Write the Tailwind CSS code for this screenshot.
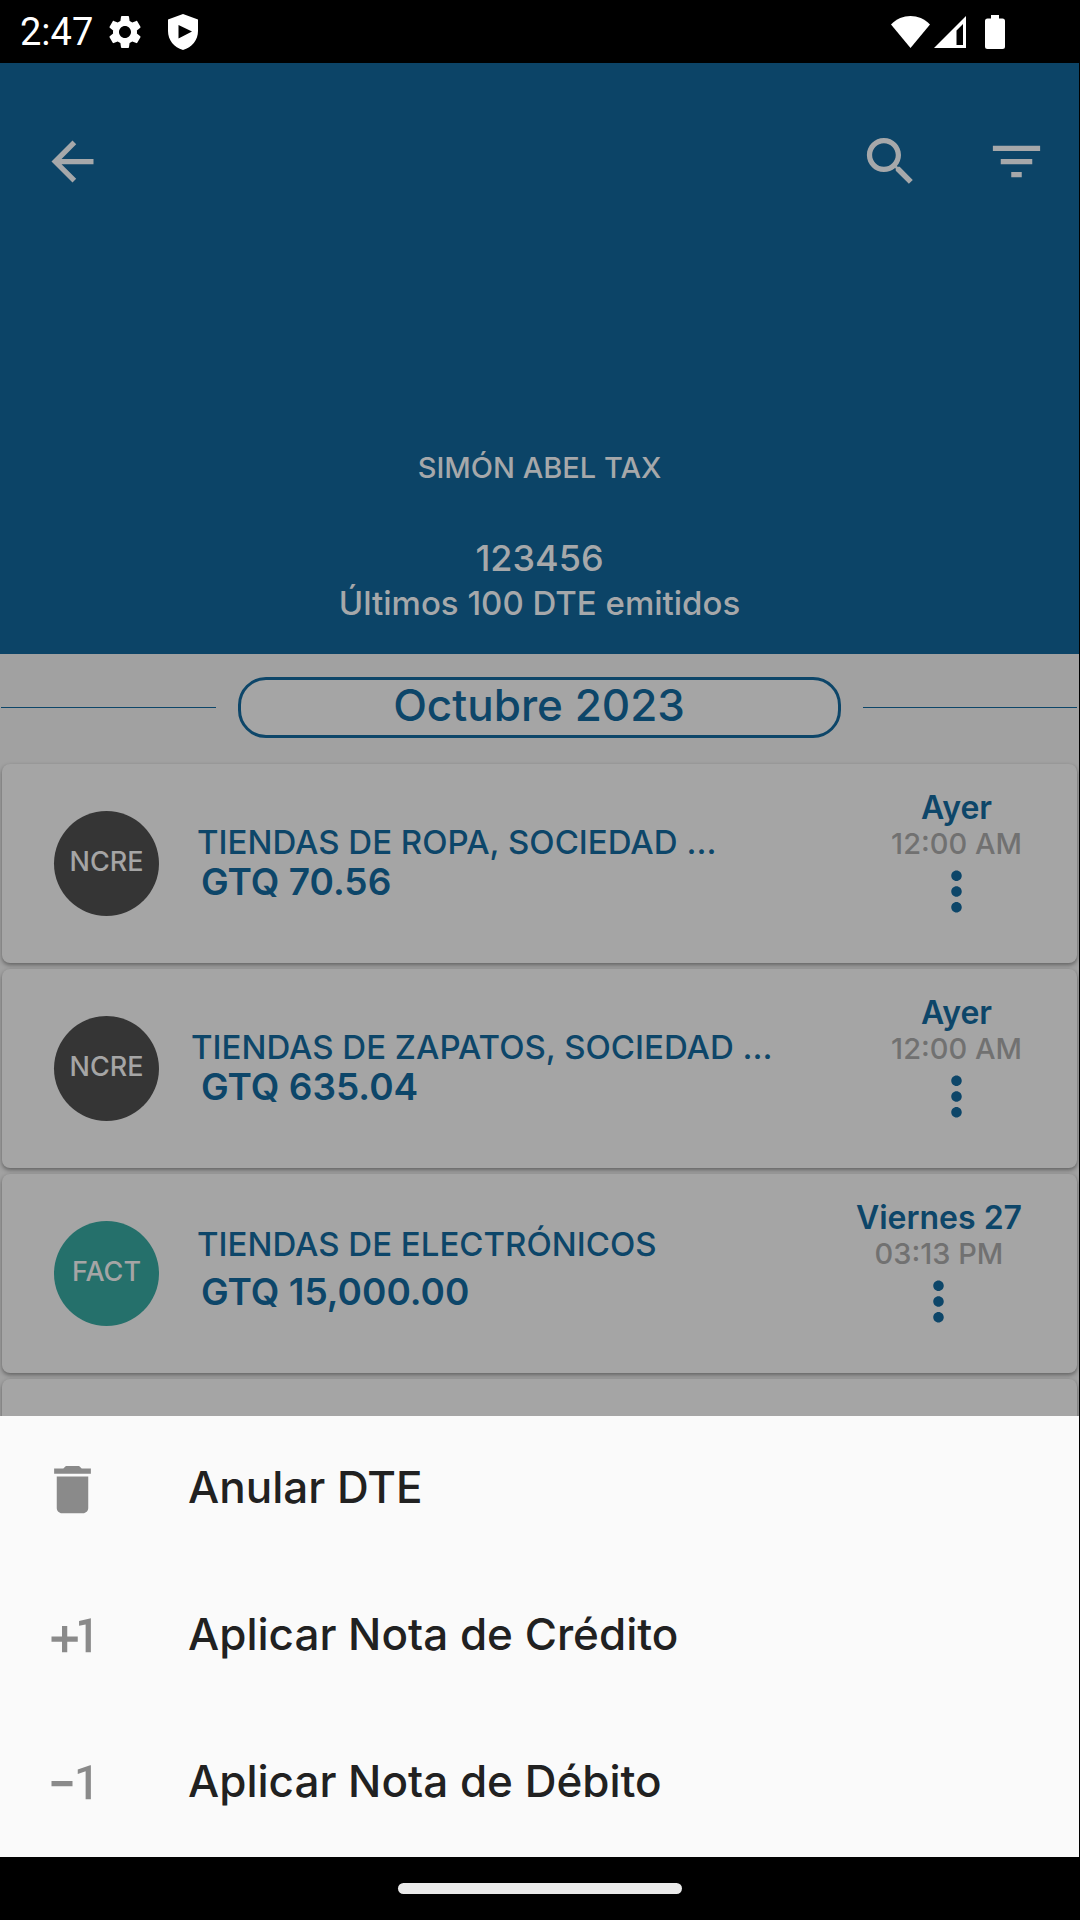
<!DOCTYPE html>
<html lang="es">
<head>
<meta charset="utf-8">
<meta name="viewport" content="width=device-width, initial-scale=1">
<title>DTE emitidos</title>
<script src="https://cdn.jsdelivr.net/npm/@tailwindcss/browser@4"></script>
</head>
<body class="flex h-screen flex-col bg-black font-['Inter',sans-serif] font-medium">
  <svg class="hidden" aria-hidden="true">
    <symbol id="more" viewBox="0 0 24 24"><path d="M12 8c1.1 0 2-.9 2-2s-.9-2-2-2-2 .9-2 2 .9 2 2 2zm0 2c-1.1 0-2 .9-2 2s.9 2 2 2 2-.9 2-2-.9-2-2-2zm0 6c-1.1 0-2 .9-2 2s.9 2 2 2 2-.9 2-2-.9-2-2-2z"/></symbol>
  </svg>

  <!-- Status bar -->
  <div class="flex h-[63px] shrink-0 items-center justify-between pr-[75px] pl-5 text-white">
    <div class="flex items-center">
      <span class="font-['Roboto',sans-serif] text-[38px] leading-none font-normal">2:47</span>
      <svg class="ml-3 size-10" viewBox="0 0 24 24" fill="currentColor"><path d="M19.14 12.94c.04-.3.06-.61.06-.94 0-.32-.02-.64-.07-.94l2.03-1.58c.18-.14.23-.41.12-.61l-1.92-3.32c-.12-.22-.37-.29-.59-.22l-2.39.96c-.5-.38-1.03-.7-1.62-.94l-.36-2.54c-.04-.24-.24-.41-.48-.41h-3.84c-.24 0-.43.17-.47.41l-.36 2.54c-.59.24-1.13.57-1.62.94l-2.39-.96c-.22-.08-.47 0-.59.22L2.74 8.87c-.12.21-.08.47.12.61l2.03 1.58c-.05.3-.09.63-.09.94s.02.64.07.94l-2.03 1.58c-.18.14-.23.41-.12.61l1.92 3.32c.12.22.37.29.59.22l2.39-.96c.5.38 1.03.7 1.62.94l.36 2.54c.05.24.24.41.48.41h3.84c.24 0 .44-.17.47-.41l.36-2.54c.59-.24 1.13-.56 1.62-.94l2.39.96c.22.08.47 0 .59-.22l1.92-3.32c.12-.22.07-.47-.12-.61l-2.01-1.58zM12 15.6c-1.98 0-3.6-1.62-3.6-3.6s1.62-3.6 3.6-3.6 3.6 1.62 3.6 3.6-1.62 3.6-3.6 3.6z"/></svg>
      <svg class="ml-[23px] h-9 w-[30px]" viewBox="0 0 30 36" fill="currentColor" fill-rule="evenodd"><path d="M15 0 30 5.500V17c0 9-6 16.500-15 19C6 33.500 0 26 0 17V5.500zM10.500 11v13.500L24 17.500z"/></svg>
    </div>
    <div class="flex items-center">
      <svg class="h-8 w-[39px]" viewBox="0 0 39 32" fill="currentColor"><path d="M0 8.500C11-2.800 28-2.800 39 8.500L19.500 32z"/></svg>
      <svg class="ml-1 h-8 w-8" viewBox="0 0 32 32" fill="currentColor" fill-rule="evenodd"><path d="M32 0V32H0zM29 8 22.500 14.500V29H29z"/></svg>
      <svg class="ml-[19px] h-[34px] w-5" viewBox="0 0 20 34" fill="currentColor"><path d="M6 0h8v3.400h3.500A2.500 2.500 0 0 1 20 5.900v25.600a2.500 2.500 0 0 1-2.500 2.500h-15A2.500 2.500 0 0 1 0 31.500V5.900a2.500 2.500 0 0 1 2.500-2.500H6z"/></svg>
    </div>
  </div>

  <div class="relative mr-px flex-1 overflow-hidden bg-[#a1a1a1]">
    <header class="flex h-[591px] flex-col bg-[#0c4467] text-[#a6a8aa]">
      <div class="mt-[67px] flex items-center pr-[31px] pl-[41px]">
        <button type="button" aria-label="Atrás" class="mr-auto"><svg class="size-[63px]" viewBox="0 0 24 24" fill="currentColor"><path d="M20 11H7.830l5.590-5.590L12 4l-8 8 8 8 1.410-1.410L7.830 13H20z"/></svg></button>
        <button type="button" aria-label="Buscar" class="mr-[63px]"><svg class="size-[63px]" viewBox="0 0 24 24" fill="currentColor"><path d="M15.500 14h-.790l-.280-.270C15.410 12.590 16 11.110 16 9.500 16 5.910 13.090 3 9.500 3S3 5.910 3 9.500 5.910 16 9.500 16c1.610 0 3.090-.590 4.230-1.570l.270.280v.790l5 4.990L20.490 19zm-6 0C7.010 14 5 11.990 5 9.500S7.010 5 9.500 5 14 7.010 14 9.500 11.990 14 9.500 14z"/></svg></button>
        <button type="button" aria-label="Filtrar"><svg class="size-[63px]" viewBox="0 0 24 24" fill="currentColor"><path d="M10 18h4v-2h-4zM3 6v2h18V6zm3 7h12v-2H6z"/></svg></button>
      </div>
      <div class="mt-auto pb-[29px] text-center">
        <h1 class="text-[29px] leading-9">SIMÓN ABEL TAX</h1>
        <p class="mt-[49px] text-[36px] leading-[46px]">123456</p>
        <p class="text-[33px] leading-[44px]">Últimos 100 DTE emitidos</p>
      </div>
    </header>

    <main>
      <div class="flex items-center gap-[22px] pt-[23px] pr-[2px] pb-[26px] pl-px">
        <div class="h-px flex-1 bg-[#0d4669]"></div>
        <h2 class="flex h-[61px] w-[603px] justify-center rounded-[28px] border-3 border-[#0d4669] bg-[#a5a5a5] text-[44px] leading-[50px] text-[#0d4669]">Octubre 2023</h2>
        <div class="h-px flex-1 bg-[#0d4669]"></div>
      </div>

      <ul class="flex flex-col gap-[6px] px-[2px]">
        <li class="flex h-[199px] rounded-lg bg-[#a5a5a5] pr-[55px] pl-[52px] text-[#0d4669] shadow-[0_2px_4px_rgba(0,0,0,0.4)]">
          <span class="flex size-[105px] shrink-0 items-center justify-center self-center rounded-full bg-[#353535] pb-[2px] text-[27px] text-[#a5a5a5]">NCRE</span>
          <div class="ml-[38px] flex-1 pt-[59px]">
            <p class="text-[33px] leading-[39px]">TIENDAS DE ROPA, SOCIEDAD ...</p>
            <p class="pl-1 text-[37px] leading-10 font-semibold">GTQ 70.56</p>
          </div>
          <div class="flex flex-col items-center pt-[25px]">
            <p class="text-[32px] leading-[38px] font-semibold">Ayer</p>
            <p class="text-[29px] leading-[33px] text-[#717171]">12:00 AM</p>
            <button type="button" aria-label="Más opciones"><svg class="size-[63px]" fill="currentColor"><use href="#more"/></svg></button>
          </div>
        </li>
        <li class="flex h-[199px] rounded-lg bg-[#a5a5a5] pr-[55px] pl-[52px] text-[#0d4669] shadow-[0_2px_4px_rgba(0,0,0,0.4)]">
          <span class="flex size-[105px] shrink-0 items-center justify-center self-center rounded-full bg-[#353535] pb-[2px] text-[27px] text-[#a5a5a5]">NCRE</span>
          <div class="ml-8 flex-1 pt-[59px]">
            <p class="text-[33px] leading-[39px]">TIENDAS DE ZAPATOS, SOCIEDAD ...</p>
            <p class="pl-[10px] text-[37px] leading-10 font-semibold">GTQ 635.04</p>
          </div>
          <div class="flex flex-col items-center pt-[25px]">
            <p class="text-[32px] leading-[38px] font-semibold">Ayer</p>
            <p class="text-[29px] leading-[33px] text-[#717171]">12:00 AM</p>
            <button type="button" aria-label="Más opciones"><svg class="size-[63px]" fill="currentColor"><use href="#more"/></svg></button>
          </div>
        </li>
        <li class="flex h-[199px] rounded-lg bg-[#a5a5a5] pr-[55px] pl-[52px] text-[#0d4669] shadow-[0_2px_4px_rgba(0,0,0,0.4)]">
          <span class="flex size-[105px] shrink-0 items-center justify-center self-center rounded-full bg-[#25706b] pb-[2px] text-[27px] text-[#a5a5a5]">FACT</span>
          <div class="ml-[38px] flex-1 pt-[51px]">
            <p class="text-[33px] leading-[39px]">TIENDAS DE ELECTRÓNICOS</p>
            <p class="mt-2 pl-1 text-[37px] leading-10 font-semibold">GTQ 15,000.00</p>
          </div>
          <div class="flex flex-col items-center pt-[25px]">
            <p class="text-[32px] leading-[38px] font-semibold">Viernes 27</p>
            <p class="text-[29px] leading-[33px] text-[#717171]">03:13 PM</p>
            <button type="button" aria-label="Más opciones"><svg class="size-[63px]" fill="currentColor"><use href="#more"/></svg></button>
          </div>
        </li>
        <li class="h-[199px] rounded-lg bg-[#a5a5a5] shadow-[0_2px_4px_rgba(0,0,0,0.4)]"></li>
      </ul>
    </main>

    <!-- Bottom sheet -->
    <div role="menu" class="absolute inset-x-0 bottom-0 bg-[#fafafa] text-[44px] text-[#212121]">
      <button type="button" role="menuitem" class="flex h-[147px] w-full items-center pl-[41px]">
        <svg class="mr-[84px] size-[63px] text-[#8a8a8a]" viewBox="0 0 24 24" fill="currentColor"><path d="M6 19c0 1.100.900 2 2 2h8c1.100 0 2-.900 2-2V7H6zM19 4h-3.500l-1-1h-5l-1 1H5v2h14z"/></svg>
        <span class="pb-[6px]">Anular DTE</span>
      </button>
      <button type="button" role="menuitem" class="flex h-[147px] w-full items-center pl-[41px]">
        <svg class="mr-[84px] size-[63px] text-[#8a8a8a]" viewBox="0 0 24 24" fill="currentColor"><path d="M10 8H8v4H4v2h4v4h2v-4h4v-2h-4zm4.500-1.920V7.900l2.500-.500V18h2V5z"/></svg>
        <span class="pb-[6px]">Aplicar Nota de Crédito</span>
      </button>
      <button type="button" role="menuitem" class="flex h-[147px] w-full items-center pl-[41px]">
        <svg class="mr-[84px] size-[63px] text-[#8a8a8a]" viewBox="0 0 24 24" fill="currentColor"><path d="M4 11v2h8v-2zm15 7h-2V7.380L14 8.400V6.700L18.700 5h.300z"/></svg>
        <span class="pb-[6px]">Aplicar Nota de Débito</span>
      </button>
    </div>
  </div>

  <!-- Gesture navigation bar -->
  <div class="flex h-[63px] shrink-0 items-center justify-center"><div class="h-[11px] w-[284px] rounded-full bg-[#eaeaea]"></div></div>
</body>
</html>
